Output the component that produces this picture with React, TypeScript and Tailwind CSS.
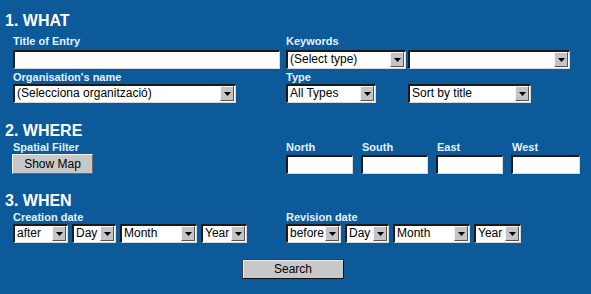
import React from "react";

function Arrow() {
  return (
    <div className="h-full w-[14px] shrink-0 bg-[#c4c4c4] border-t border-l border-t-[#f4f4f4] border-l-[#f4f4f4] border-b border-r border-b-[#555] border-r-[#555] flex items-center justify-center">
      <svg width="7" height="4" viewBox="0 0 7 4">
        <polygon points="0,0 7,0 3.5,4" fill="#000" />
      </svg>
    </div>
  );
}

function Field({ className, text, arrow }: { className: string; text?: string; arrow?: boolean }) {
  return (
    <div
      className={
        "h-[19px] shrink-0 bg-white flex items-stretch border-t-2 border-l-2 border-t-[#1a1a1a] border-l-[#1a1a1a] border-b border-r border-b-[#d8d8d8] border-r-[#d8d8d8] pr-[1px] pb-[1px] " +
        className
      }
    >
      <div className="flex-1 min-w-0 pl-[2px] text-[12px] leading-[15px] text-black whitespace-nowrap overflow-hidden">
        {text}
      </div>
      {arrow && <Arrow />}
    </div>
  );
}

function Label({ children, className = "" }: { children: React.ReactNode; className?: string }) {
  return <div className={"text-[11px] leading-[13px] font-bold text-[#e4f2ff] " + className}>{children}</div>;
}

function Heading({ children, className = "" }: { children: React.ReactNode; className?: string }) {
  return (
    <div className={"ml-[-8px] h-[16px] text-[16px] leading-[16px] font-bold text-white " + className}>{children}</div>
  );
}

function Button({ className, children }: { className: string; children: React.ReactNode }) {
  return (
    <div
      className={
        "h-[20px] shrink-0 bg-[#c8c8c8] border flex items-center justify-center text-[12px] leading-[14px] text-black " +
        className
      }
    >
      {children}
    </div>
  );
}

export default function App() {
  return (
    <div className="w-[591px] h-[294px] bg-[#0c5a9a] pt-[13px] pl-[13px] font-['Liberation_Sans',Arial,sans-serif] overflow-hidden">
      <Heading>1. WHAT</Heading>
      <div className="flex mt-[6px]">
        <Label className="w-[273px]">Title of Entry</Label>
        <Label>Keywords</Label>
      </div>
      <div className="flex mt-[2px]">
        <div className="w-[273px]">
          <Field className="w-[267px]" />
        </div>
        <div className="flex gap-[2px]">
          <Field className="w-[120px]" text="(Select type)" arrow />
          <Field className="w-[162px]" arrow />
        </div>
      </div>
      <div className="flex mt-[2px]">
        <Label className="w-[273px]">Organisation's name</Label>
        <Label>Type</Label>
      </div>
      <div className="flex">
        <div className="w-[273px]">
          <Field className="w-[223px]" text="(Selecciona organització)" arrow />
        </div>
        <div className="flex gap-[32px]">
          <Field className="w-[90px]" text="All Types" arrow />
          <Field className="w-[123px]" text="Sort by title" arrow />
        </div>
      </div>

      <Heading className="mt-[20px]">2. WHERE</Heading>
      <div className="flex mt-[2px]">
        <Label className="w-[273px]">Spatial Filter</Label>
        <div className="flex">
          <Label className="w-[76px]">North</Label>
          <Label className="w-[75px]">South</Label>
          <Label className="w-[75px]">East</Label>
          <Label>West</Label>
        </div>
      </div>
      <div className="flex">
        <div className="w-[273px]">
          <Button className="w-[81px] ml-[-1px] border-t-[#f2f2f2] border-l-[#f2f2f2] border-b-[#6a6a6a] border-r-[#6a6a6a]">
            Show Map
          </Button>
        </div>
        <div className="flex gap-[8px] mt-[1px]">
          <Field className="w-[67px]" />
          <Field className="w-[67px]" />
          <Field className="w-[67px]" />
          <Field className="w-[69px]" />
        </div>
      </div>

      <Heading className="mt-[19px]">3. WHEN</Heading>
      <div className="flex mt-[2px]">
        <Label className="w-[273px]">Creation date</Label>
        <Label>Revision date</Label>
      </div>
      <div className="flex">
        <div className="w-[273px] flex gap-[4px]">
          <Field className="w-[55px]" text="after" arrow />
          <Field className="w-[44px]" text="Day" arrow />
          <Field className="w-[77px]" text="Month" arrow />
          <Field className="w-[46px]" text="Year" arrow />
        </div>
        <div className="flex gap-[4px]">
          <Field className="w-[55px]" text="before" arrow />
          <Field className="w-[44px]" text="Day" arrow />
          <Field className="w-[77px]" text="Month" arrow />
          <Field className="w-[47px]" text="Year" arrow />
        </div>
      </div>
      <div className="flex mt-[16px] pl-[229px]">
        <Button className="w-[102px] border-t-[#3a3a3a] border-l-[#3a3a3a] border-b-[#111] border-r-[#111] shadow-[inset_1px_1px_0_#eeeeee]">
          Search
        </Button>
      </div>
    </div>
  );
}
